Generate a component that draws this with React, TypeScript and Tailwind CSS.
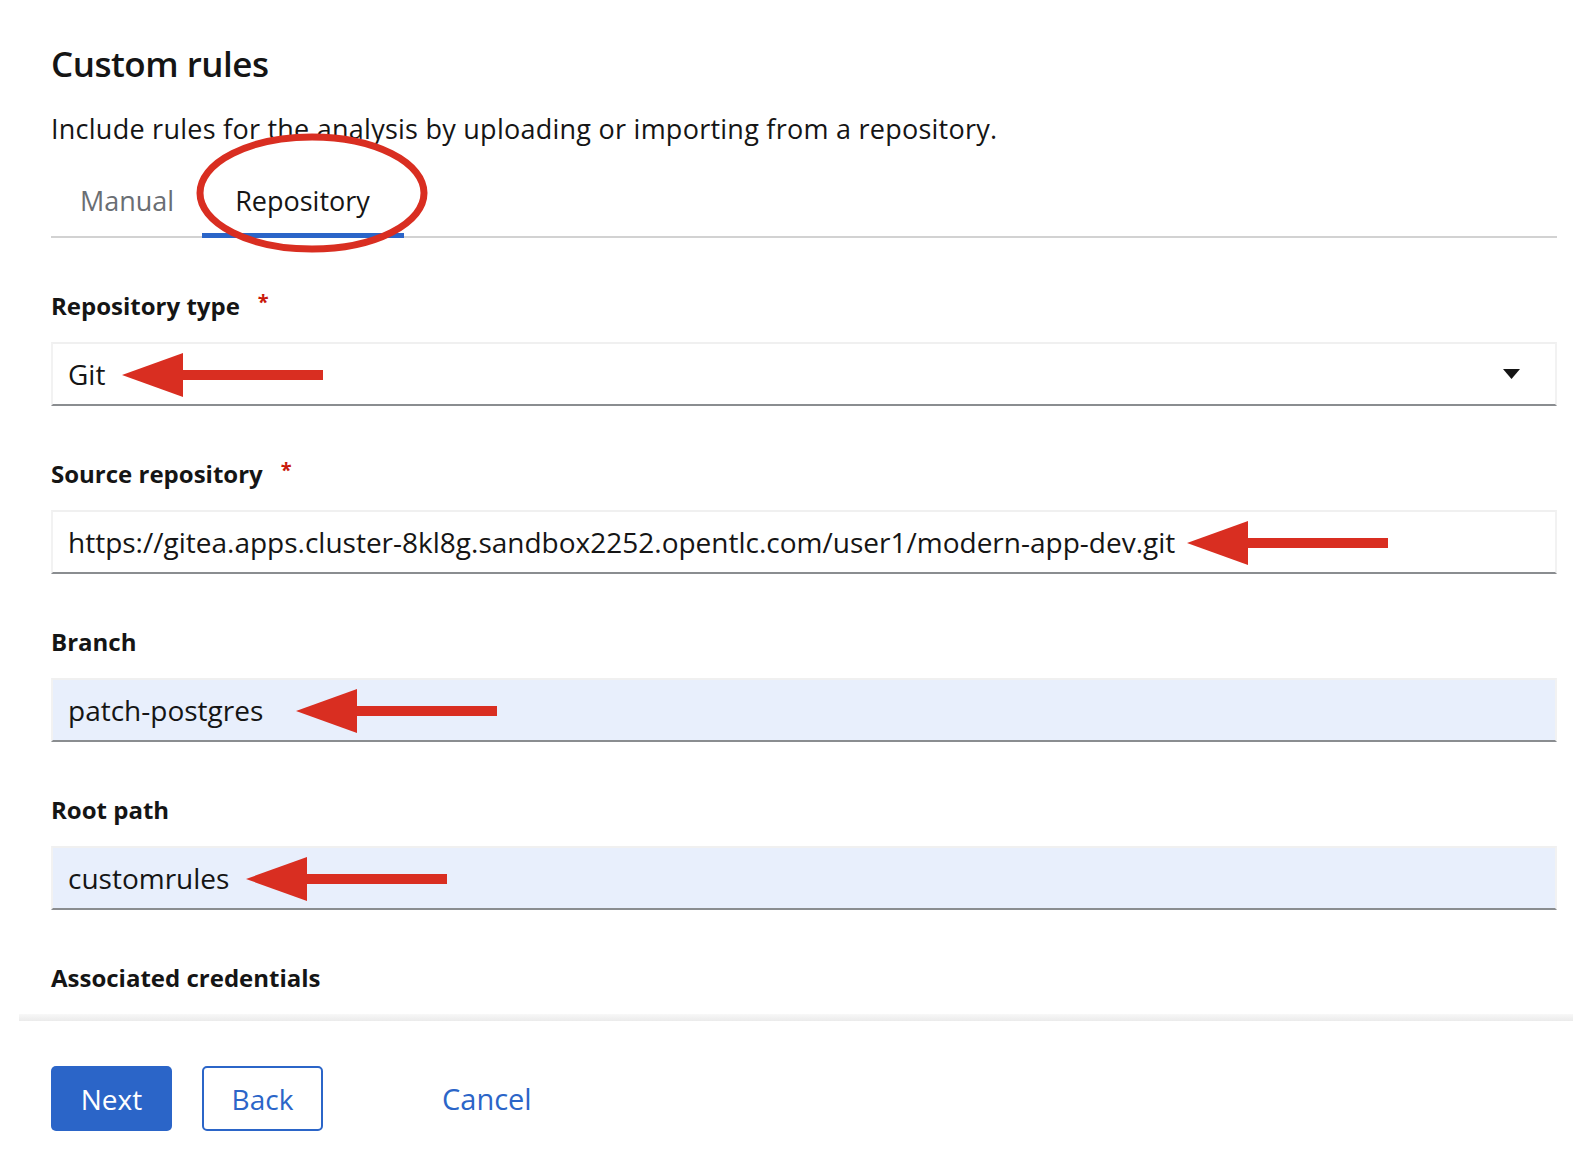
import * as React from "react"

const FONT = { fontFamily: '"Open Sans", "Liberation Sans", sans-serif' }

// hand-drawn red annotation arrow pointing left
function Arrow({ left, top }: { left: number; top: number }) {
    return (
        <svg
            className="absolute pointer-events-none"
            style={{ left, top }}
            width="202"
            height="48"
            viewBox="0 0 202 48"
        >
            <polygon points="0,24 61,2 61,46" fill="#d92e21" />
            <rect x="58" y="19" width="143" height="10" fill="#d92e21" />
        </svg>
    )
}

function Label({ text, required }: { text: string; required?: boolean }) {
    return (
        <div className="h-[34px] flex items-center text-[24px] font-bold text-[#151515]">
            {text}
            {required && <span className="ml-[18px] text-[#c9190b] text-[20px] -mt-[8px]">*</span>}
        </div>
    )
}

function Field({
    label,
    required,
    value,
    filled,
    arrowLeft,
    select,
}: {
    label: string
    required?: boolean
    value: string
    filled?: boolean
    arrowLeft?: number
    select?: boolean
}) {
    return (
        <div className="mb-[51px]">
            <Label text={label} required={required} />
            <div
                className={`relative mt-[19px] h-[64px] flex items-center pl-[15px] pr-[36px] text-[28px] text-[#151515] border-t-2 border-x-2 border-b-2 border-t-[#f0f0f0] border-x-[#f2f2f2] border-b-[#8a8d90] ${
                    filled ? "bg-[#e8effc]" : "bg-white"
                }`}
            >
                <span className="flex-1 whitespace-nowrap">{value}</span>
                {select && (
                    <svg width="17" height="10" viewBox="0 0 17 10" className="mr-[-1px]">
                        <polygon points="0,0 17,0 8.5,10" fill="#151515" />
                    </svg>
                )}
                {arrowLeft !== undefined && <Arrow left={arrowLeft} top={7} />}
            </div>
        </div>
    )
}

export default function App() {
    return (
        <div className="relative w-[1592px] h-[1158px] bg-white overflow-hidden" style={FONT}>
            {/* scrolling form area */}
            <div className="h-[1021px] overflow-hidden pl-[51px] pr-[35px] pt-[44px]">
                <h2 className="h-[40px] leading-[40px] text-[35px] font-semibold text-[#151515] tracking-[-0.5px]">
                    Custom rules
                </h2>
                <p className="mt-[26px] h-[38px] leading-[38px] text-[27px] text-[#151515] tracking-[0.25px]">
                    Include rules for the analysis by uploading or importing from a repository.
                </p>

                {/* tabs */}
                <div className="mt-[18px] relative flex h-[72px] border-b-2 border-[#d2d2d2]">
                    <button className="w-[151px] h-full flex items-center justify-center pl-[1px] text-[27px] text-[#6a6e73]">
                        Manual
                    </button>
                    <button className="relative w-[202px] h-full flex items-center justify-center pr-[1px] text-[27px] text-[#151515]">
                        Repository
                        <span className="absolute left-0 right-0 -bottom-[2px] h-[5px] bg-[#2b65c8]" />
                    </button>
                </div>

                <div className="mt-[51px]">
                    <Field label="Repository type" required value="Git" select arrowLeft={69} />
                    <Field
                        label="Source repository"
                        required
                        value="https://gitea.apps.cluster-8kl8g.sandbox2252.opentlc.com/user1/modern-app-dev.git"
                        arrowLeft={1134}
                    />
                    <Field label="Branch" value="patch-postgres" filled arrowLeft={243} />
                    <Field label="Root path" value="customrules" filled arrowLeft={193} />
                    <div>
                        <Label text="Associated credentials" />
                        <div className="mt-[19px] h-[64px] border-2 border-[#ececec] bg-white" />
                    </div>
                </div>
            </div>

            {/* footer */}
            <div className="relative mx-[19px] h-[137px] bg-white pl-[32px] pt-[45px] flex items-start">
                <div className="absolute left-0 right-0 -top-[7px] h-[7px] bg-gradient-to-b from-[#f8f8f8] to-[#ebebeb]" />
                <button className="w-[121px] h-[65px] rounded-[5px] bg-[#2b65c8] text-white text-[28px]">
                    Next
                </button>
                <button className="ml-[30px] w-[121px] h-[65px] rounded-[5px] border-2 border-[#2b65c8] text-[#2b65c8] text-[28px] bg-white">
                    Back
                </button>
                <button className="ml-[89px] h-[65px] px-[30px] text-[#2b65c8] text-[29px]">Cancel</button>
            </div>

            {/* red ellipse annotation around the Repository tab */}
            <svg
                className="absolute pointer-events-none"
                style={{ left: 192, top: 128 }}
                width="240"
                height="130"
                viewBox="0 0 240 130"
            >
                <ellipse cx="120" cy="65" rx="112" ry="56" fill="none" stroke="#d92e21" strokeWidth="7" />
            </svg>
        </div>
    )
}
